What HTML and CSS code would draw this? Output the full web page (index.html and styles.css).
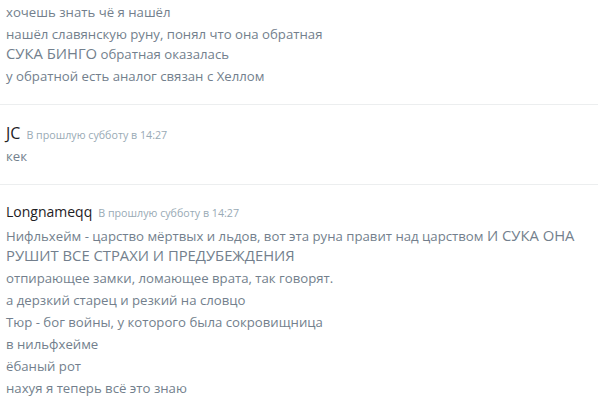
FILE: index.html
```html
<!DOCTYPE html>
<html>
<head>
    <title>Chat</title>
    <link rel="stylesheet" href="styles.css">
</head>
<body>
    <div class="messages">
        <div class="group first">
            <div class="message">хочешь знать чё я нашёл</div>
            <div class="message">нашёл славянскую руну, понял что она обратная<br><span class="caps">СУКА БИНГО</span> обратная оказалась</div>
            <div class="message">у обратной есть аналог связан с Хеллом</div>
        </div>

        <div class="group">
            <div class="header">
                <span class="username jc">JC</span>
                <span class="timestamp">В прошлую субботу в 14:27</span>
            </div>
            <div class="message">кек</div>
        </div>

        <div class="group">
            <div class="header">
                <span class="username">Longnameqq</span>
                <span class="timestamp">В прошлую субботу в 14:27</span>
            </div>
            <div class="message">Нифльхейм - царство мёртвых и льдов, вот эта руна правит над царством <span class="caps">И СУКА ОНА</span> <span class="caps">РУШИТ ВСЕ СТРАХИ И ПРЕДУБЕЖДЕНИЯ</span></div>
            <div class="message">отпирающее замки, ломающее врата, так говорят.</div>
            <div class="message">а дерзкий старец и резкий на словцо</div>
            <div class="message">Тюр - бог войны, у которого была сокровищница</div>
            <div class="message">в нильфхейме</div>
            <div class="message">ёбаный рот</div>
            <div class="message">нахуя я теперь всё это знаю</div>
        </div>
    </div>
</body>
</html>
```

FILE: styles.css
```css
body {
    margin: 0;
    background: #ffffff;
    font-family: "Open Sans", "Noto Sans", sans-serif;
}

.messages {
    margin-right: 1px;
}

/* one block of messages from a single author */
.group {
    padding: 17px 0 18px 6px;
    border-top: 1px solid #eceeef;
}

.group.first {
    padding-top: 2px;
    border-top: none;
}

.header {
    display: flex;
    align-items: baseline;
    gap: 6px;
    height: 20px;
    margin-bottom: 4px;
}

.username {
    font-size: 14px;
    color: #1e2124;
}

.username.jc {
    font-size: 16px;
}

.timestamp {
    font-size: 10.7px;
    color: #99aab5;
}

.message {
    font-size: 13.2px;
    line-height: 20px;
    color: #737f8d;
    margin-bottom: 2px;
    padding-right: 8px;
}

.message:last-child {
    margin-bottom: 0;
}

/* shouted words render a little larger */
.caps {
    font-size: 14.8px;
    line-height: 18px;
    white-space: nowrap;
}
```
